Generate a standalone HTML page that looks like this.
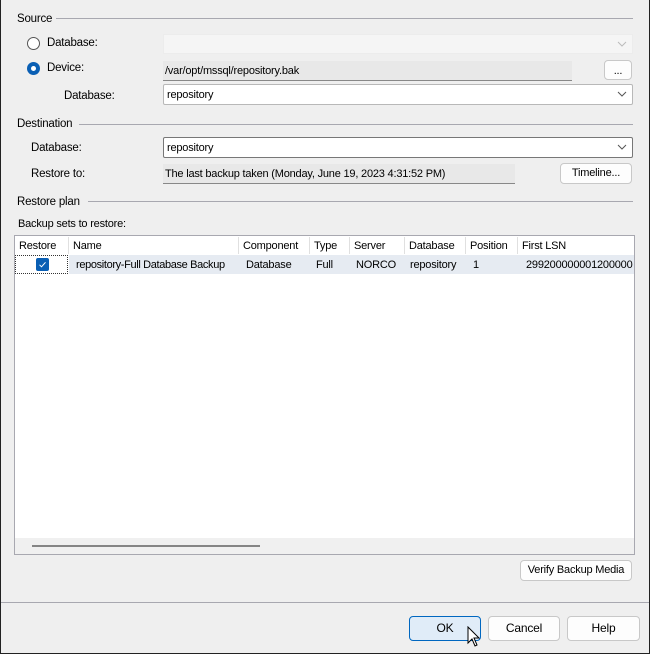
<!DOCTYPE html>
<html><head><style>
*{box-sizing:border-box;margin:0;padding:0}
body{width:650px;height:654px;background:#efefef;font-family:"Liberation Sans",sans-serif;font-size:12px;letter-spacing:-0.2px;color:#000;position:relative;overflow:hidden}
.a{position:absolute;white-space:nowrap}
.frame{left:0;top:0;width:650px;height:654px;border:1px solid #222;border-top:none}
.hl{height:1px;background:#a8a8b0}
.box{border:1px solid #b8b8b8;background:#fff;border-radius:2px;padding:4px 0 0 3px;font-size:11px}
.fld{background:#e8e8e8;border-bottom:1px solid #888;padding:4px 0 0 2px;font-size:11px}
.btn{border:1px solid #c8c8c8;background:#fdfdfd;border-radius:4px;text-align:center;font-size:11px}
.chev{position:absolute;right:4px;top:4px;width:12px;height:10px}
.th{top:237px;height:17px;border-right:1px solid #e0e0e0;padding:3px 0 0 4px;font-size:11px}
.td{top:257px;padding:2px 0 0 6px;font-size:11px}
</style></head><body>
<div class="a frame"></div>
<div class="a" style="left:17px;top:13px;font-size:11.5px">Source</div>
<div class="a hl" style="left:56px;top:18px;width:577px"></div>
<div class="a" style="left:27px;top:37px;width:13px;height:13px;border:1px solid #555;border-radius:50%;background:#fff"></div>
<div class="a" style="left:47px;top:37px;font-size:11.5px">Database:</div>
<div class="a" style="left:163px;top:34px;width:470px;height:20px;background:#f5f5f5;border:1px solid #ececec"><svg class="chev" viewBox="0 0 12 10"><path d="M2 3l4 4 4-4" fill="none" stroke="#bbb"/></svg></div>
<div class="a" style="left:27px;top:62px;width:13px;height:13px;border-radius:50%;background:#0a5fb4"></div>
<div class="a" style="left:31px;top:66px;width:5px;height:5px;border-radius:50%;background:#fff"></div>
<div class="a" style="left:47px;top:62px;font-size:11.5px">Device:</div>
<div class="a fld" style="left:163px;top:61px;width:409px;height:20px">/var/opt/mssql/repository.bak</div>
<div class="a btn" style="left:604px;top:60px;width:28px;height:20px;line-height:20px">...</div>
<div class="a" style="left:64px;top:90px;font-size:11.5px">Database:</div>
<div class="a box" style="left:163px;top:84px;width:470px;height:21px">repository<svg class="chev" viewBox="0 0 12 10"><path d="M2 3l4 4 4-4" fill="none" stroke="#555"/></svg></div>
<div class="a" style="left:17px;top:118px;font-size:11.5px">Destination</div>
<div class="a hl" style="left:79px;top:124px;width:554px"></div>
<div class="a" style="left:31px;top:142px;font-size:11.5px">Database:</div>
<div class="a box" style="left:163px;top:137px;width:470px;height:21px;border-color:#777">repository<svg class="chev" viewBox="0 0 12 10"><path d="M2 3l4 4 4-4" fill="none" stroke="#555"/></svg></div>
<div class="a" style="left:31px;top:168px;font-size:11.5px">Restore to:</div>
<div class="a fld" style="left:163px;top:164px;width:352px;height:20px">The last backup taken (Monday, June 19, 2023 4:31:52 PM)</div>
<div class="a btn" style="left:560px;top:163px;width:72px;height:21px;line-height:19px">Timeline...</div>
<div class="a" style="left:17px;top:196px;font-size:11.5px">Restore plan</div>
<div class="a hl" style="left:88px;top:201px;width:545px"></div>
<div class="a" style="left:18px;top:218px;font-size:11px">Backup sets to restore:</div>
<div class="a" style="left:14px;top:235px;width:621px;height:320px;border:1px solid #a8a8b0;background:#fff"></div>
<div class="a th" style="left:15px;width:54px">Restore</div>
<div class="a th" style="left:69px;width:170px">Name</div>
<div class="a th" style="left:239px;width:71px">Component</div>
<div class="a th" style="left:310px;width:40px">Type</div>
<div class="a th" style="left:350px;width:55px">Server</div>
<div class="a th" style="left:405px;width:61px">Database</div>
<div class="a th" style="left:466px;width:52px">Position</div>
<div class="a th" style="left:518px;width:116px;border-right:none">First LSN</div>
<div class="a" style="left:69px;top:255px;width:565px;height:19px;background:#e6ebf2"></div>
<div class="a" style="left:15px;top:255px;width:53px;height:19px;border:1px dotted #333"></div>
<div class="a" style="left:36px;top:258px;width:13px;height:13px;border-radius:2px;background:#0a5fb4"><svg width="13" height="13" viewBox="0 0 13 13" style="position:absolute;left:0;top:0"><path d="M3.5 6.8l2 2 4-4.5" fill="none" stroke="#fff" stroke-width="1"/></svg></div>
<div class="a td" style="left:70px;letter-spacing:-0.35px">repository-Full Database Backup</div>
<div class="a td" style="left:240px">Database</div>
<div class="a td" style="left:310px">Full</div>
<div class="a td" style="left:350px">NORCO</div>
<div class="a td" style="left:404px">repository</div>
<div class="a td" style="left:467px">1</div>
<div class="a td" style="left:520px;width:114px;overflow:hidden">299200000001200000</div>
<div class="a" style="left:15px;top:538px;width:619px;height:16px;background:#f0f0f0"></div>
<div class="a" style="left:32px;top:545px;width:228px;height:2px;background:#858585"></div>
<div class="a btn" style="left:520px;top:560px;width:112px;height:21px;line-height:19px">Verify Backup Media</div>
<div class="a hl" style="left:1px;top:602px;width:648px"></div>
<div class="a btn" style="left:409px;top:616px;width:72px;height:25px;line-height:23px;background:#e0ecf8;border-color:#0067c0;font-size:12px">OK</div>
<div class="a btn" style="left:488px;top:616px;width:72px;height:25px;line-height:23px;font-size:12px">Cancel</div>
<div class="a btn" style="left:567px;top:616px;width:73px;height:25px;line-height:23px;font-size:12px">Help</div>
<svg class="a" style="left:467px;top:626px" width="14" height="22" viewBox="0 0 14 22"><path d="M1 1v16l4-4 3 7 2-1-3-7h5z" fill="#fff" stroke="#000" stroke-width="1"/></svg>
</body></html>
